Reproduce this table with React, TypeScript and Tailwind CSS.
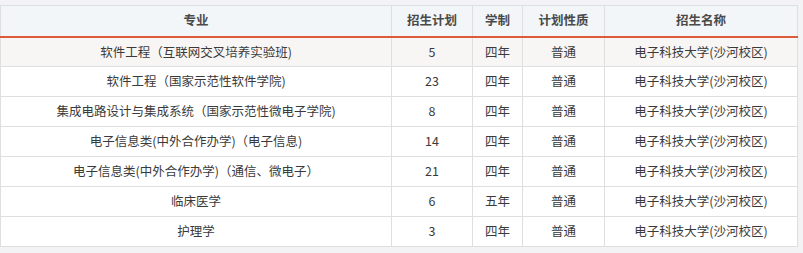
import React from "react";

const rows = [
  ["软件工程（互联网交叉培养实验班)", "5", "四年", "普通", "电子科技大学(沙河校区)"],
  ["软件工程（国家示范性软件学院)", "23", "四年", "普通", "电子科技大学(沙河校区)"],
  ["集成电路设计与集成系统（国家示范性微电子学院)", "8", "四年", "普通", "电子科技大学(沙河校区)"],
  ["电子信息类(中外合作办学)（电子信息)", "14", "四年", "普通", "电子科技大学(沙河校区)"],
  ["电子信息类(中外合作办学)（通信、微电子）", "21", "四年", "普通", "电子科技大学(沙河校区)"],
  ["临床医学", "6", "五年", "普通", "电子科技大学(沙河校区)"],
  ["护理学", "3", "四年", "普通", "电子科技大学(沙河校区)"],
];

const heads = ["专业", "招生计划", "学制", "计划性质", "招生名称"];
const widths = ["w-[391px]", "w-[81px]", "w-[50px]", "w-[82px]", "w-[193px]"];

export default function App() {
  return (
    <div
      className="w-[803px] h-[253px] bg-[#f3f3f5] pt-[5px]"
      style={{ fontFamily: '"Microsoft YaHei", "Noto Sans CJK SC", "Liberation Sans", sans-serif' }}
    >
      <table className="w-[797px] border-collapse table-fixed text-[12.5px] text-[#3a3a3a] bg-white">
        <thead>
          <tr className="h-[31px] bg-[#f3f6f8] border-b-[2px] border-b-[#dd5a3a]">
            {heads.map((h, i) => (
              <th
                key={h}
                className={`${widths[i]} border border-[#dfdfe2] border-b-[#dd5a3a] border-b-[2px] font-bold text-[#4a4a4a] text-center p-0`}
              >
                {h}
              </th>
            ))}
          </tr>
        </thead>
        <tbody>
          {rows.map((r, ri) => (
            <tr key={ri} className={`h-[30px] ${ri === 0 ? "bg-[#f8f5f5]" : "bg-white"}`}>
              {r.map((c, ci) => (
                <td key={ci} className="border border-[#dfdfe2] text-center p-0 leading-none">
                  {c}
                </td>
              ))}
            </tr>
          ))}
        </tbody>
      </table>
    </div>
  );
}
